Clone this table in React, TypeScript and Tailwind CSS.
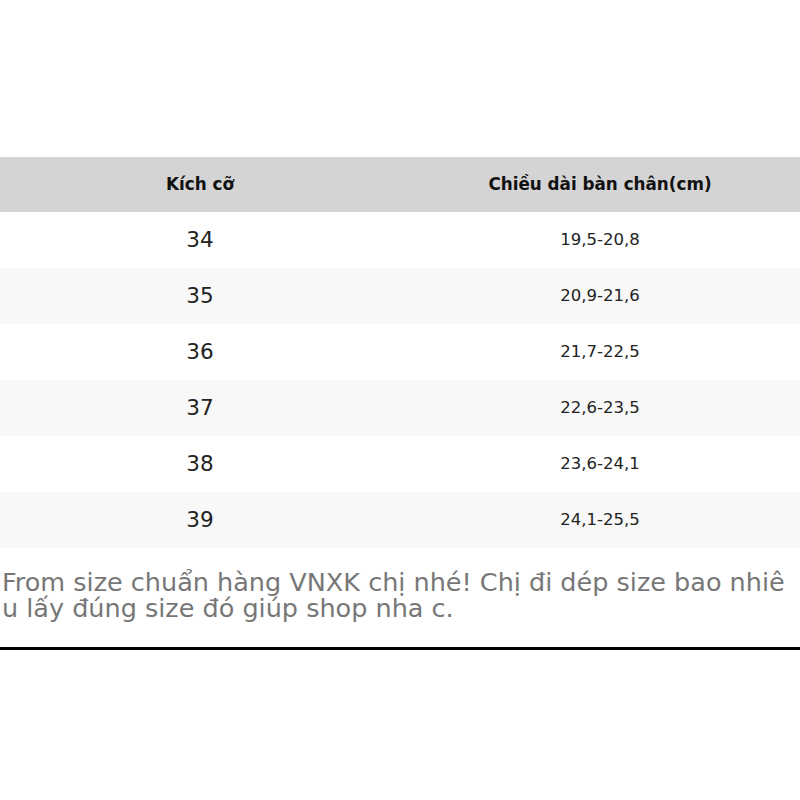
import React from "react";

const rows = [
  ["34", "19,5-20,8"],
  ["35", "20,9-21,6"],
  ["36", "21,7-22,5"],
  ["37", "22,6-23,5"],
  ["38", "23,6-24,1"],
  ["39", "24,1-25,5"],
];

export default function App() {
  return (
    <div className="w-[800px] h-[800px] bg-white flex flex-col" style={{ fontFamily: '"DejaVu Sans", sans-serif' }}>
      <div className="h-[157px]" />
      <div className="grid grid-cols-2 h-[55px] bg-[#d4d4d4] items-center text-[16.8px] font-bold text-[#111]">
        <div className="text-center">Kích cỡ</div>
        <div className="text-center">Chiều dài bàn chân(cm)</div>
      </div>
      {rows.map(([a, b], i) => (
        <div key={a} className={`grid grid-cols-2 h-[56px] items-center text-[#222] ${i % 2 === 1 ? "bg-[#f8f8f8]" : "bg-white"}`}>
          <div className="text-center text-[21.5px]">{a}</div>
          <div className="text-center text-[16.5px]">{b}</div>
        </div>
      ))}
      <div className="pl-[2px] pt-[21px] text-[25.5px] leading-[26px] text-[#777] h-[99px] whitespace-nowrap">
        <div>From size chuẩn hàng VNXK chị nhé! Chị đi dép size bao nhiê</div>
        <div>u lấy đúng size đó giúp shop nha c.</div>
      </div>
      <div className="h-[3px] bg-black" />
    </div>
  );
}
